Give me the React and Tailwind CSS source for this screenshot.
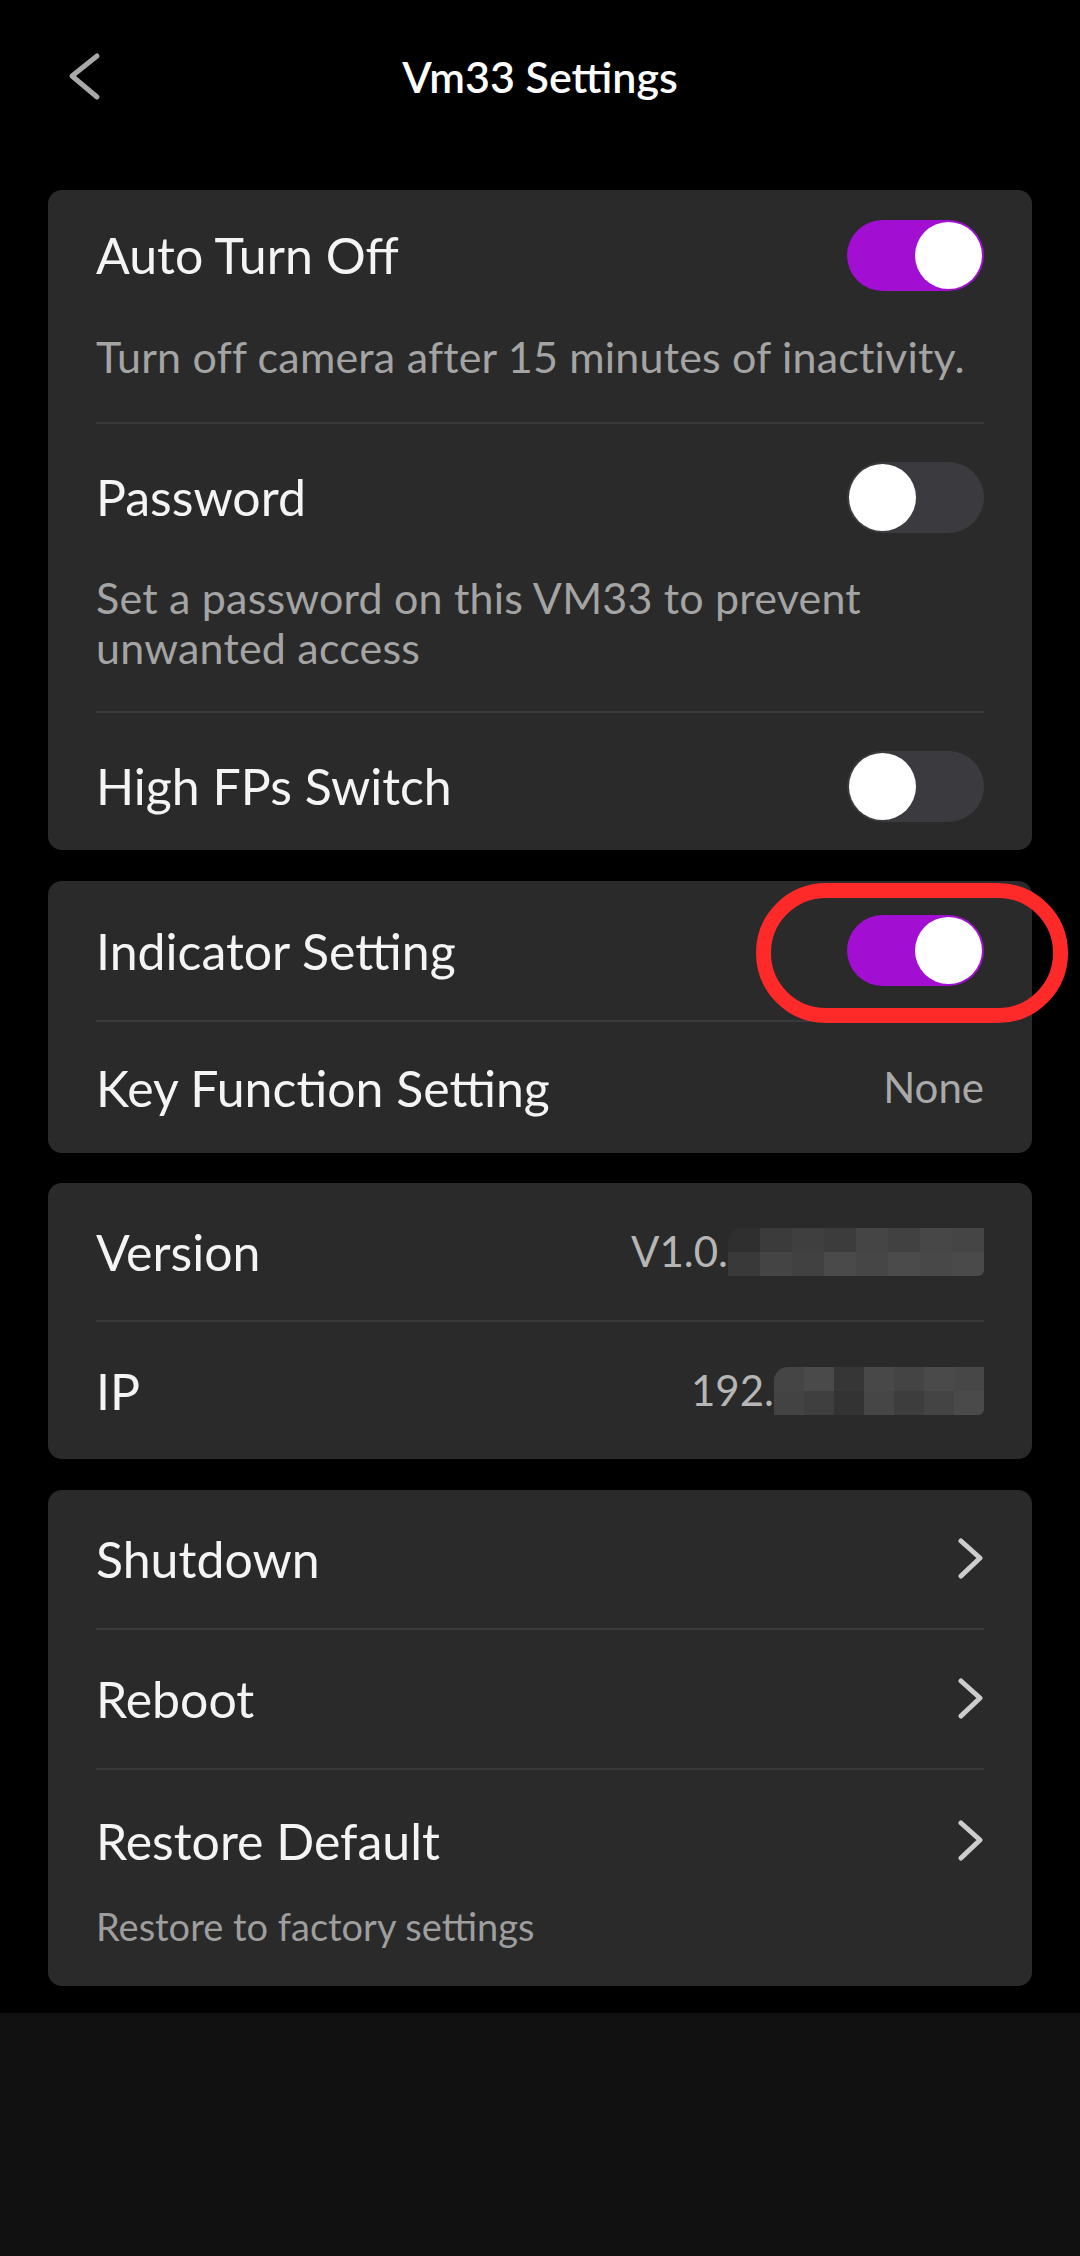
import React from 'react';

function Toggle({ on }) {
  return (
    <div
      className={`flex h-[71px] w-[137px] items-center rounded-full p-[2px] ${
        on ? 'justify-end bg-[#a20fd2]' : 'justify-start bg-[#3b3b3f]'
      }`}
    >
      <div className="h-[67px] w-[67px] rounded-full bg-white" />
    </div>
  );
}

function Chevron() {
  return (
    <svg width="26" height="42" viewBox="0 0 26 42" fill="none">
      <polyline
        points="3,3 22,20 3,38"
        stroke="#cdcdcd"
        strokeWidth="5"
        strokeLinecap="round"
        strokeLinejoin="round"
      />
    </svg>
  );
}

function Divider() {
  return <div className="h-[2px] bg-[#393939]" />;
}

// mosaic that hides part of the version / ip values
function Mosaic({ rows, cell }) {
  return (
    <div className="flex flex-col overflow-hidden rounded-tl-[14px] rounded-br-[6px]">
      {rows.map((row, i) => (
        <div key={i} className="flex">
          {row.map((c, j) => (
            <div key={j} className={`${cell} ${c}`} />
          ))}
        </div>
      ))}
    </div>
  );
}

function Row({ label, right, className = 'h-[136px]' }) {
  return (
    <div className={`flex items-center justify-between ${className}`}>
      <span className="text-[50px] leading-[70px] text-[#f4f4f4]">{label}</span>
      {right}
    </div>
  );
}

export default function App() {
  return (
    <div className="flex min-h-[2256px] flex-col bg-black font-['Lato',sans-serif]">
      <header className="relative flex h-[154px] items-center justify-center">
        <div className="absolute left-[68px] top-[52px]">
          <svg width="34" height="50" viewBox="0 0 34 50" fill="none">
            <polyline
              points="29,4 4,24 29,45"
              stroke="#a9a9a9"
              strokeWidth="5"
              strokeLinecap="round"
              strokeLinejoin="round"
            />
          </svg>
        </div>
        <h1 className="text-[43px] font-semibold text-white">Vm33 Settings</h1>
      </header>

      <main className="flex flex-col px-[48px] pt-[36px]">
        {/* card 1 */}
        <section className="rounded-[14px] bg-[#2a2a2a] px-[48px]">
          <div className="pt-[30px] pb-[40px]">
            <Row label="Auto Turn Off" right={<Toggle on />} className="h-[70px]" />
            <p className="mt-[42px] text-[43px] leading-[50px] tracking-[0.2px] text-[#a4a4a4]">
              Turn off camera after 15 minutes of inactivity.
            </p>
          </div>
          <Divider />
          <div className="pt-[38px] pb-[38px]">
            <Row label="Password" right={<Toggle />} className="h-[70px]" />
            <p className="mt-[41px] text-[43px] leading-[50px] tracking-[0.2px] text-[#a4a4a4]">
              Set a password on this VM33 to prevent unwanted access
            </p>
          </div>
          <Divider />
          <div className="pt-[38px] pb-[29px]">
            <Row label="High FPs Switch" right={<Toggle />} className="h-[70px]" />
          </div>
        </section>

        {/* card 2 */}
        <section className="relative mt-[31px] rounded-[14px] bg-[#2a2a2a] px-[48px]">
          <Row label="Indicator Setting" right={<Toggle on />} className="h-[139px]" />
          <Divider />
          <Row
            label="Key Function Setting"
            right={<span className="text-[42px] text-[#a9a9a9]">None</span>}
            className="h-[131px]"
          />
          <div className="pointer-events-none absolute left-[708px] top-[2px] h-[140px] w-[312px] rounded-full border-[15px] border-[#fe2a2a]" />
        </section>

        {/* card 3 */}
        <section className="mt-[30px] rounded-[14px] bg-[#2a2a2a] px-[48px]">
          <Row
            label="Version"
            className="h-[137px]"
            right={
              <div className="flex items-center">
                <span className="text-[42px] text-[#b6b6b6]">V1.0.</span>
                <Mosaic
                  cell="h-[24px] w-[32px]"
                  rows={[
                    ['bg-[#2f2f2f]', 'bg-[#3b3b3b]', 'bg-[#3f3f3f]', 'bg-[#3c3c3c]', 'bg-[#454545]', 'bg-[#414141]', 'bg-[#474747]', 'bg-[#454545]'],
                    ['bg-[#393939]', 'bg-[#444444]', 'bg-[#414141]', 'bg-[#4a4a4a]', 'bg-[#464646]', 'bg-[#4b4b4b]', 'bg-[#484848]', 'bg-[#4a4a4a]'],
                  ]}
                />
              </div>
            }
          />
          <Divider />
          <Row
            label="IP"
            className="h-[137px]"
            right={
              <div className="flex items-center">
                <span className="text-[42px] text-[#b6b6b6]">192.</span>
                <Mosaic
                  cell="h-[24px] w-[30px]"
                  rows={[
                    ['bg-[#454545]', 'bg-[#4a4a4a]', 'bg-[#363636]', 'bg-[#484848]', 'bg-[#444444]', 'bg-[#4a4a4a]', 'bg-[#474747]'],
                    ['bg-[#434343]', 'bg-[#3f3f3f]', 'bg-[#333333]', 'bg-[#464646]', 'bg-[#3d3d3d]', 'bg-[#444444]', 'bg-[#4a4a4a]'],
                  ]}
                />
              </div>
            }
          />
        </section>

        {/* card 4 */}
        <section className="mt-[31px] rounded-[14px] bg-[#2a2a2a] px-[48px]">
          <Row label="Shutdown" right={<Chevron />} className="h-[138px]" />
          <Divider />
          <Row label="Reboot" right={<Chevron />} className="h-[138px]" />
          <Divider />
          <div className="pt-[36px] pb-[37px]">
            <Row label="Restore Default" right={<Chevron />} className="h-[70px]" />
            <p className="mt-[27px] text-[38px] leading-[46px] text-[#9e9e9e]">
              Restore to factory settings
            </p>
          </div>
        </section>
      </main>

      <div className="mt-auto h-[243px] bg-[#111111]" />
    </div>
  );
}
